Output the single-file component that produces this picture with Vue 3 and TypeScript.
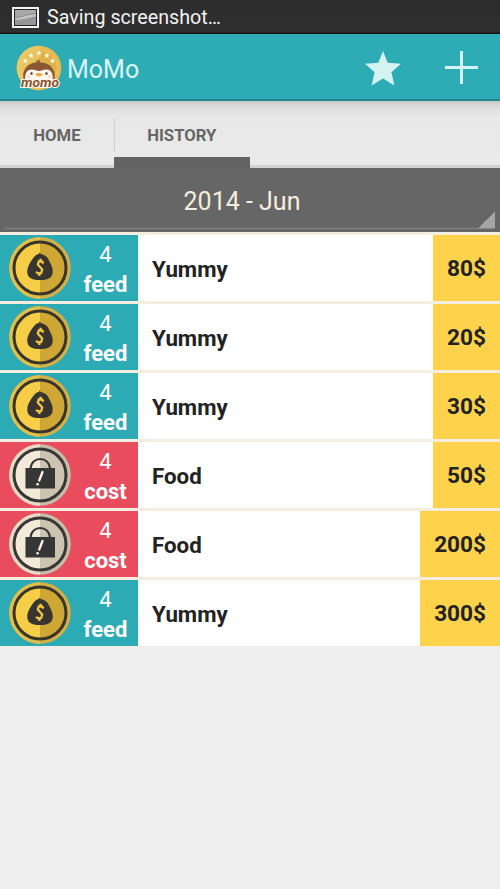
<script setup lang="ts">
type Kind = 'feed' | 'cost'

interface Entry {
  id: number
  day: number
  kind: Kind
  title: string
  amount: number
}

const tabs = ['HOME', 'HISTORY']
const activeTab = 'HISTORY'
const month = '2014 - Jun'

const entries: Entry[] = [
  { id: 1, day: 4, kind: 'feed', title: 'Yummy', amount: 80 },
  { id: 2, day: 4, kind: 'feed', title: 'Yummy', amount: 20 },
  { id: 3, day: 4, kind: 'feed', title: 'Yummy', amount: 30 },
  { id: 4, day: 4, kind: 'cost', title: 'Food', amount: 50 },
  { id: 5, day: 4, kind: 'cost', title: 'Food', amount: 200 },
  { id: 6, day: 4, kind: 'feed', title: 'Yummy', amount: 300 },
]
</script>

<template>
  <div class="screen">
    <div class="status">
      <svg class="status__icon" viewBox="0 0 27 21">
        <rect width="27" height="21" fill="#f4f4f4" />
        <rect x="2" y="2" width="23" height="17" fill="#222" />
        <rect x="3" y="3" width="21" height="15" fill="#a9a9a9" />
        <path d="M3 11 L10 10 L16 8 L24 7 V18 H3Z" fill="#c4c4c4" />
        <path d="M3 14 L12 13 L24 10 V18 H3Z" fill="#969696" />
        <path d="M3 10.500 L10 9.500 L16 7.500 L24 6.500 M3 13.500 L12 12.500 L24 10" fill="none" stroke="#777" stroke-width=".6" />
      </svg>
      <span class="status__text">Saving screenshot…</span>
    </div>

    <header class="bar">
      <svg class="bar__logo" viewBox="0 0 46 46">
        <circle cx="23" cy="23" r="22.300" fill="#e5ba50" />
        <path d="M23 .7 A22.300 22.300 0 0 0 23 45.300Z" fill="#eac866" />
        <circle cx="23" cy="23" r="18.300" fill="#dfb14a" stroke="#f0cf78" stroke-width=".8" />
        <path d="M23 4.700 A18.300 18.300 0 0 0 23 41.300Z" fill="#e8c45f" />
        <g fill="#fffbe9">
          <path
            v-for="(s, i) in [[9.3, 15.8], [15, 10.5], [23, 8], [30.8, 10.5], [36.5, 15.8]]"
            :key="i"
            :transform="`translate(${s[0]} ${s[1]})`"
            d="M0-2.800 .8-.9 2.700-.8 1.200.5 1.700 2.500 0 1.400-1.700 2.500-1.200.5-2.700-.8-.8-.9Z"
          />
        </g>
        <path d="M7.500 34 C5.500 24 13 17.500 20.500 17.500 L20.200 14.500 L22.300 16.500 L22.500 13.500 L24.500 17.500 C33 17.500 40.500 24 38.500 34Z" fill="#8b5734" />
        <path d="M9.500 37 C8 29 11 24.500 15.500 24.500 C19 24.500 20.500 26 23 26 C25.500 26 27 24.500 30.500 24.500 C35 24.500 38 29 36.500 37Z" fill="#fff7ed" />
        <circle cx="15.500" cy="28.500" r="1.200" fill="#543622" />
        <circle cx="30.500" cy="28.500" r="1.200" fill="#543622" />
        <ellipse cx="12.500" cy="31.500" rx="2.200" ry="1.400" fill="#f8ddcc" />
        <ellipse cx="33.500" cy="31.500" rx="2.200" ry="1.400" fill="#f8ddcc" />
        <path d="M19.200 29.500 Q23 26 26.800 29.500 Q23 33.500 19.200 29.500Z" fill="#f1a53d" />
        <text x="5" y="42" class="bar__logo-text" textLength="38" lengthAdjust="spacingAndGlyphs">momo</text>
      </svg>
      <h1 class="bar__title">MoMo</h1>
      <svg class="bar__star" viewBox="0 0 36 35">
        <path d="M18 0 22.700 11.700 36 12.700 26.400 21.200 29.400 34.500 18 27.600 6.600 34.500 9.600 21.200 0 12.700 13.300 11.700Z" />
      </svg>
      <svg class="bar__plus" viewBox="0 0 33 33">
        <path d="M15 0h3v15h15v3H18v15h-3V18H0v-3h15Z" />
      </svg>
    </header>

    <nav class="tabs">
      <div v-for="tab in tabs" :key="tab" class="tab" :class="{ 'tab--active': tab === activeTab }">
        {{ tab }}
      </div>
    </nav>

    <div class="month">
      <div class="month__spinner">
        <span class="month__text">{{ month }}</span>
      </div>
    </div>

    <ul class="list">
      <li v-for="entry in entries" :key="entry.id" class="row">
        <div class="row__kind" :class="`row__kind--${entry.kind}`">
          <svg v-if="entry.kind === 'feed'" class="row__coin" viewBox="0 0 62 62">
            <circle cx="31" cy="31" r="30.800" fill="#d3b047" />
            <path d="M31 .2 A30.800 30.800 0 0 0 31 61.800Z" fill="#e0c04b" />
            <circle cx="31" cy="31" r="26" fill="#cfa735" />
            <path d="M31 5 A26 26 0 0 0 31 57Z" fill="#f6cd46" />
            <circle cx="31" cy="31" r="26" fill="none" stroke="#38342b" stroke-width="3" />
            <path d="M28.500 17.200 L30 17 L30.500 15.200 L31.800 17 L33.500 17.600 C37 18.500 38.500 20.500 40 23.500 C42.500 28 44 31.500 43.700 35.500 C43.200 41.500 38 43 31 43 C24 43 18.800 41.500 18.300 35.500 C18 31.500 19.500 28 22.500 23.500 C24.500 20.500 26 18.500 28.500 17.200Z" fill="#38352f" />
            <path d="M34.500 26.500 L33 24.500 L29.800 24.500 L28.800 27.500 L33.200 32.500 L32.200 36 L29 36.300 L27 34.800 M31.800 21.800 L31.200 24.500 M30.800 36 L30.200 39" fill="none" stroke="#efc547" stroke-width="2.300" />
          </svg>
          <svg v-else class="row__coin" viewBox="0 0 62 62">
            <circle cx="31" cy="31" r="30.800" fill="#c7bcaa" />
            <path d="M31 .2 A30.800 30.800 0 0 0 31 61.800Z" fill="#e8dac4" />
            <circle cx="31" cy="31" r="26" fill="#cdc3b1" />
            <path d="M31 5 A26 26 0 0 0 31 57Z" fill="#f3e9d8" />
            <circle cx="31" cy="31" r="26" fill="none" stroke="#363636" stroke-width="3" />
            <path d="M21.500 25 C22 11.500 40.500 11.500 41 25" fill="none" stroke="#363636" stroke-width="2" />
            <rect x="16.500" y="24" width="29.500" height="20.500" fill="#363636" />
            <path d="M33.500 28 L30.200 36.500" stroke="#fff8ea" stroke-width="2.300" stroke-linecap="round" />
            <circle cx="28.600" cy="40.300" r="1.300" fill="#fff8ea" />
          </svg>
          <div class="row__meta">
            <span class="row__day">{{ entry.day }}</span>
            <span class="row__label">{{ entry.kind }}</span>
          </div>
        </div>
        <div class="row__title">{{ entry.title }}</div>
        <div class="row__amount">{{ entry.amount }}$</div>
      </li>
    </ul>
  </div>
</template>

<style>
body {
  background: #eee;
}
</style>

<style scoped>
.screen {
  width: 500px;
  height: 889px;
  overflow: hidden;
  background: #eee;
  font-family: Roboto, "Liberation Sans", sans-serif;
}

.status {
  display: flex;
  align-items: center;
  box-sizing: border-box;
  height: 34px;
  padding: 1px 0 0 12px;
  background: linear-gradient(#2b2b2b, #303030 94%, #111 98%);
}

.status__icon {
  width: 27px;
  height: 21px;
}

.status__text {
  margin-left: 8px;
  color: #f2f2f2;
  font-size: 19.7px;
}

.bar {
  display: flex;
  align-items: center;
  box-sizing: border-box;
  height: 67px;
  padding: 2px 22px 0 16px;
  border-bottom: 2px solid #25878c;
  background: #2dacb6;
  fill: #d5f3f2;
}

.bar__logo {
  width: 46px;
  height: 46px;
}

.bar__logo-text {
  fill: #8a5330;
  stroke: #fff7ed;
  stroke-width: 2px;
  paint-order: stroke;
  font-size: 12.5px;
  font-style: italic;
  font-weight: 700;
}

.bar__title {
  margin: 3px auto 0 5px;
  color: #d9f7f6;
  font-size: 25px;
  font-weight: 400;
}

.bar__star {
  width: 36px;
  height: 35px;
  margin: 2px 44px 0 0;
}

.bar__plus {
  width: 33px;
  height: 33px;
}

.tabs {
  display: flex;
  box-sizing: border-box;
  height: 67px;
  border-bottom: 3px solid #d2d2d2;
  background: linear-gradient(#c9c9c9, #dadada 5px, #e8e8e8 15px, #eaeaea);
}

.tab {
  box-sizing: border-box;
  height: 67px;
  padding: 0 33.300px;
  color: #666;
  font-size: 16.7px;
  font-weight: 700;
  line-height: 69px;
}

.tab + .tab {
  background: linear-gradient(#d0d0d0, #d0d0d0) 0 17px / 1px 34px no-repeat;
}

.tab--active {
  border-bottom: 11px solid #636363;
}

.month {
  height: 64px;
  box-sizing: border-box;
  padding: 0 5px 3px;
  background: #666;
}

.month__spinner {
  display: flex;
  align-items: center;
  justify-content: center;
  box-sizing: border-box;
  height: 61px;
  padding: 6px 16px 0 0;
  border-bottom: 1px solid #858585;
  background: linear-gradient(135deg, transparent 50%, #a5a5a5 50%) right bottom / 17px 17px no-repeat;
}

.month__text {
  color: #f5eddd;
  font-size: 25px;
}

.list {
  display: flex;
  flex-direction: column;
  gap: 3px;
  margin: 0;
  padding: 3px 0 1px;
  background: #f5eddf;
  list-style: none;
}

.row {
  display: flex;
  height: 66px;
  background: #fff;
}

.row__kind {
  display: flex;
  align-items: center;
  width: 138px;
  box-sizing: border-box;
  padding-left: 9px;
  color: #fff;
}

.row__kind--feed {
  background: #2dabb5;
}

.row__kind--cost {
  background: #e94c5d;
}

.row__coin {
  width: 62px;
  height: 62px;
}

.row__meta {
  display: flex;
  flex: 1;
  flex-direction: column;
  align-items: center;
  padding: 3px 0 0 2px;
}

.row__day {
  font-size: 22px;
  line-height: 30px;
}

.row__label {
  font-size: 22px;
  font-weight: 700;
  line-height: 30px;
}

.row__title {
  flex: 1;
  padding-left: 14px;
  color: #222;
  font-size: 22.3px;
  font-weight: 700;
  line-height: 68px;
}

.row__amount {
  padding: 0 14px;
  background: #ffd24b;
  color: #222;
  font-size: 22.6px;
  font-weight: 700;
  line-height: 68px;
}
</style>
